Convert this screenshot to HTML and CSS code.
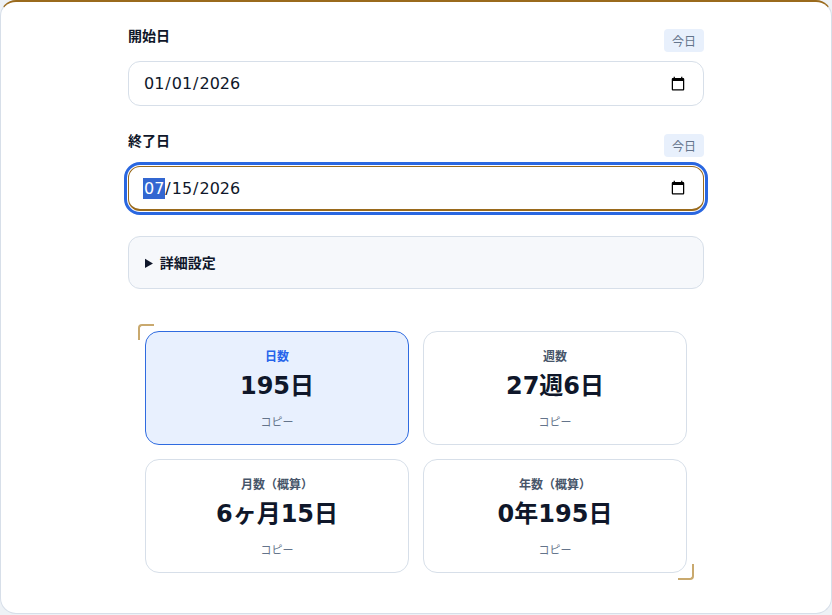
FILE: index.html
```html
<!DOCTYPE html>
<html lang="ja">
<head>
<meta charset="utf-8">
<title>日数計算</title>
<link rel="stylesheet" href="styles.css">
</head>
<body>
<main class="card">
  <div class="inner">
    <div class="field">
      <div class="label-row">
        <label class="label" for="start">開始日</label>
        <button class="today" type="button">今日</button>
      </div>
      <input class="date" id="start" type="date" value="2026-01-01">
    </div>
    <div class="field">
      <div class="label-row">
        <label class="label" for="end">終了日</label>
        <button class="today" type="button">今日</button>
      </div>
      <input class="date date-focus" id="end" type="date" value="2026-07-15" autofocus>
    </div>
    <details class="advanced">
      <summary class="advanced-summary">詳細設定</summary>
    </details>
    <section class="results">
      <div class="result result-active">
        <div class="result-label">日数</div>
        <div class="result-value">195日</div>
        <div class="result-copy">コピー</div>
      </div>
      <div class="result">
        <div class="result-label">週数</div>
        <div class="result-value">27週6日</div>
        <div class="result-copy">コピー</div>
      </div>
      <div class="result">
        <div class="result-label">月数（概算）</div>
        <div class="result-value">6ヶ月15日</div>
        <div class="result-copy">コピー</div>
      </div>
      <div class="result">
        <div class="result-label">年数（概算）</div>
        <div class="result-value">0年195日</div>
        <div class="result-copy">コピー</div>
      </div>
    </section>
  </div>
</main>
</body>
</html>
```
FILE: styles.css
```css
* { box-sizing: border-box; }
html, body { margin: 0; padding: 0; }
body {
  background: #eef2f6;
  font-family: "DejaVu Sans", "Noto Sans CJK JP", sans-serif;
  color: #0f172a;
}
.card {
  height: 614px;
  background: #ffffff;
  border: 1px solid #d7dfe9;
  border-top: 2px solid #9a6a1c;
  border-radius: 16px;
  padding-top: 27px;
}
.inner {
  width: 576px;
  margin: 0 auto;
}
.field { margin-bottom: 28px; }
.field + .field { margin-bottom: 25px; }
.label-row {
  display: flex;
  justify-content: space-between;
  align-items: flex-start;
  height: 23px;
  margin-bottom: 9px;
}
.label {
  font-family: "Noto Sans CJK JP", sans-serif;
  font-weight: 700;
  font-size: 14px;
  line-height: 16px;
  margin-top: -2px;
  color: #0f172a;
}
.today {
  font-family: "Noto Sans CJK JP", sans-serif;
  font-size: 12px;
  color: #64748b;
  background: #e8f0fc;
  border: none;
  border-radius: 4px;
  width: 40px;
  height: 23px;
  padding: 0;
}
.date {
  display: block;
  width: 100%;
  height: 45px;
  border: 1px solid #d7dfe9;
  border-radius: 12px;
  padding: 0 15px 0 14px;
  font-family: "DejaVu Sans", sans-serif;
  font-size: 16px;
  color: #0f172a;
  background: #ffffff;
}
.date-focus {
  border-color: #9a6a1c;
  border-bottom-width: 2px;
  outline: 3px solid #2a67e0;
  outline-offset: 1px;
}
.date-focus:focus { outline: 3px solid #2a67e0; outline-offset: 1px; }
.advanced {
  background: #f6f8fb;
  border: 1px solid #d7dfe9;
  border-radius: 12px;
  padding: 16px 16px;
}
.advanced-summary {
  font-family: "Noto Sans CJK JP", sans-serif;
  font-weight: 700;
  font-size: 14px;
  line-height: 19px;
  cursor: pointer;
}
.results {
  position: relative;
  margin: 35px 10px 0;
  padding: 7px;
  display: grid;
  grid-template-columns: 1fr 1fr;
  gap: 14px;
}
.results::before,
.results::after {
  content: "";
  position: absolute;
  width: 14px;
  height: 14px;
  border-color: #c9a96e;
  border-style: solid;
}
.results::before {
  left: 0;
  top: 0;
  border-width: 2px 0 0 2px;
  border-top-left-radius: 4px;
}
.results::after {
  right: 0;
  bottom: 0;
  border-width: 0 2px 2px 0;
  border-bottom-right-radius: 4px;
}
.result {
  height: 114px;
  border: 1px solid #d7dfe9;
  border-radius: 14px;
  background: #ffffff;
  display: flex;
  flex-direction: column;
  align-items: center;
  padding-top: 16px;
}
.result-active {
  background: #e8f0fe;
  border-color: #2f6be0;
}
.result-label {
  font-family: "Noto Sans CJK JP", sans-serif;
  font-weight: 700;
  font-size: 12px;
  line-height: 16px;
  color: #475569;
}
.result-active .result-label { color: #2563eb; }
.result-value {
  font-family: "DejaVu Sans", "Noto Sans CJK JP", sans-serif;
  font-weight: 700;
  font-size: 24px;
  line-height: 30px;
  margin-top: 7px;
  color: #0f172a;
}
.result-copy {
  font-family: "Noto Sans CJK JP", sans-serif;
  font-size: 11px;
  line-height: 14px;
  margin-top: 13px;
  color: #64748b;
}
```
